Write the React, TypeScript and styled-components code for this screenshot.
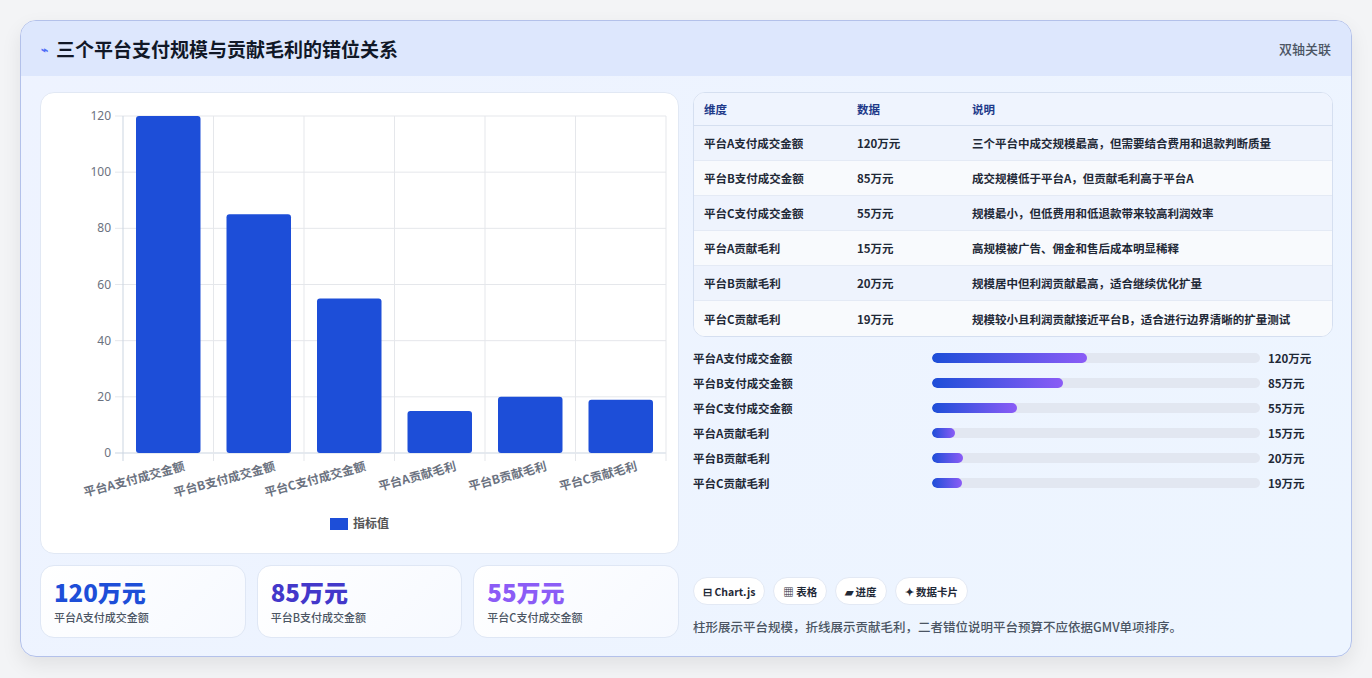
import React from "react";
import styled, { createGlobalStyle } from "styled-components";

const Global = createGlobalStyle`
  html,body{margin:0;padding:0;background:#f3f4f6;}
  body{font-family:"Noto Sans CJK SC","Noto Sans",sans-serif;}
  *{box-sizing:border-box;}
`;
const Page = styled.div`width:1372px;height:678px;padding:20px;`;
const Card = styled.div`
  width:1332px;height:637px;border:1px solid #b3c1ea;border-radius:16px;overflow:hidden;
  background:linear-gradient(135deg,#eef3ff 0%,#edf5ff 100%);
  box-shadow:0 8px 20px rgba(0,0,0,0.08);display:flex;flex-direction:column;
`;
const Header = styled.div`
  height:56px;background:#dde7fd;display:flex;align-items:center;justify-content:space-between;padding:0 20px 0 20px;
`;
const Title = styled.div`display:flex;align-items:center;gap:8px;font-size:19px;font-weight:700;color:#111827;`;
const Badge = styled.div`font-size:13px;color:#4b5563;font-weight:500;`;
const Body = styled.div`flex:1;display:grid;grid-template-columns:639px 640px;gap:14px;padding:16px 19px 18px 19px;`;
const Col = styled.div`display:flex;flex-direction:column;`;
const ChartCard = styled.div`height:462px;background:#fff;border:1px solid #e1e8f4;border-radius:14px;`;
const Stats = styled.div`display:grid;grid-template-columns:repeat(3,1fr);gap:11px;margin-top:11px;`;
const Stat = styled.div`height:73px;background:linear-gradient(135deg,#fff,#f6f9ff);border:1px solid #dfe7f5;border-radius:14px;padding:9px 13px;`;
const StatVal = styled.div<{c:string}>`font-size:24px;font-weight:800;color:${p=>p.c};line-height:34px;`;
const StatLab = styled.div`font-size:11px;color:#4b5563;font-weight:500;`;
const Table = styled.div`border:1px solid #d5dff0;border-radius:12px;overflow:hidden;background:#fff;`;
const Row = styled.div<{head?:boolean;alt?:boolean}>`
  display:grid;grid-template-columns:153px 115px 1fr;padding:0 10px;align-items:center;
  height:${p=>p.head?33:35}px;font-size:11.5px;font-weight:${p=>p.head?700:600};
  color:${p=>p.head?"#1e3a8a":"#1f2937"};
  background:${p=>p.head?"#eff4fe":p.alt?"#eef3fd":"#f8fafd"};
  border-bottom:${p=>p.head?"1px solid #d5dff0":"1px solid #e4eaf5"};
  &:last-child{border-bottom:none;}
`;
const Bars = styled.div`display:flex;flex-direction:column;gap:7px;margin-top:12px;`;
const BarRow = styled.div`display:grid;grid-template-columns:239px 328px 1fr;align-items:center;gap:0;height:18px;font-size:11.5px;font-weight:700;color:#1f2937;`;
const Track = styled.div`height:10px;border-radius:5px;background:#e2e7f1;overflow:hidden;`;
const Fill = styled.div`height:100%;border-radius:5px;background:linear-gradient(90deg,#1d4ed8,#8b5cf6);`;
const BarVal = styled.div`padding-left:8px;`;
const Spacer = styled.div`flex:1;`;
const Chips = styled.div`display:flex;gap:8px;`;
const Chip = styled.div`height:28px;padding:0 9px;border-radius:14px;background:#fff;border:1px solid #e3e9f4;display:flex;align-items:center;font-size:10.5px;font-weight:700;color:#1f2937;gap:3px;`;
const Note = styled.div`margin-top:12px;font-size:12.5px;color:#4b5563;font-weight:500;margin-bottom:2px;`;

const labels=["平台A支付成交金额","平台B支付成交金额","平台C支付成交金额","平台A贡献毛利","平台B贡献毛利","平台C贡献毛利"];
const vals=[120,85,55,15,20,19];
const desc=["三个平台中成交规模最高，但需要结合费用和退款判断质量","成交规模低于平台A，但贡献毛利高于平台A","规模最小，但低费用和低退款带来较高利润效率","高规模被广告、佣金和售后成本明显稀释","规模居中但利润贡献最高，适合继续优化扩量","规模较小且利润贡献接近平台B，适合进行边界清晰的扩量测试"];
const pct=[47.3,40,26,7,9.5,9];

function Chart(){
  const L=82,R=625,T=23,B=360;const cw=(R-L)/6;
  const y=(v:number)=>B-(v/120)*(B-T);
  return <svg width="637" height="460" style={{display:"block"}}>
    {[0,20,40,60,80,100,120].map(v=><g key={v}>
      <line x1={L-8} x2={R} y1={y(v)} y2={y(v)} stroke={v===0?"#cbd5e1":"#e5e7eb"}/>
      <text x={L-12} y={y(v)+4} textAnchor="end" fontSize="12" fill="#6b7280" fontFamily="Noto Sans">{v}</text>
    </g>)}
    {Array.from({length:7}).map((_,i)=><line key={i} x1={L+i*cw} x2={L+i*cw} y1={T} y2={B+8} stroke={i===0?"#cbd5e1":"#e5e7eb"}/>)}
    {vals.map((v,i)=><rect key={i} x={L+i*cw+13} width={cw-26} y={y(v)} height={B-y(v)} rx="3" fill="#1d4ed8"/>)}
    {labels.map((l,i)=><text key={i} transform={`translate(${L+i*cw+cw/2+17},${B+17}) rotate(-15)`} textAnchor="end" fontSize="12" fontWeight="700" fill="#6b7280">{l}</text>)}
    <rect x="289" y="425" width="18" height="12" fill="#1d4ed8"/>
    <text x="312" y="435" fontSize="12" fill="#555" fontWeight="600">指标值</text>
  </svg>;
}

export default function App(){
  return <Page><Global/><Card>
    <Header>
      <Title><span style={{color:"#4f6ef7",fontSize:12}}>⌁</span>三个平台支付规模与贡献毛利的错位关系</Title>
      <Badge>双轴关联</Badge>
    </Header>
    <Body>
      <Col>
        <ChartCard><Chart/></ChartCard>
        <Stats>
          <Stat><StatVal c="#1d4ed8">120万元</StatVal><StatLab>平台A支付成交金额</StatLab></Stat>
          <Stat><StatVal c="#4338ca">85万元</StatVal><StatLab>平台B支付成交金额</StatLab></Stat>
          <Stat><StatVal c="#8b5cf6">55万元</StatVal><StatLab>平台C支付成交金额</StatLab></Stat>
        </Stats>
      </Col>
      <Col>
        <Table>
          <Row head><div>维度</div><div>数据</div><div>说明</div></Row>
          {labels.map((l,i)=><Row key={i} alt={i%2===0}><div>{l}</div><div>{vals[i]}万元</div><div>{desc[i]}</div></Row>)}
        </Table>
        <Bars>
          {labels.map((l,i)=><BarRow key={i}><div>{l}</div><Track><Fill style={{width:pct[i]+"%"}}/></Track><BarVal>{vals[i]}万元</BarVal></BarRow>)}
        </Bars>
        <Spacer/>
        <Chips>
          <Chip>⊟ Chart.js</Chip><Chip>▦ 表格</Chip><Chip>▰ 进度</Chip><Chip>✦ 数据卡片</Chip>
        </Chips>
        <Note>柱形展示平台规模，折线展示贡献毛利，二者错位说明平台预算不应依据GMV单项排序。</Note>
      </Col>
    </Body>
  </Card></Page>;
}
